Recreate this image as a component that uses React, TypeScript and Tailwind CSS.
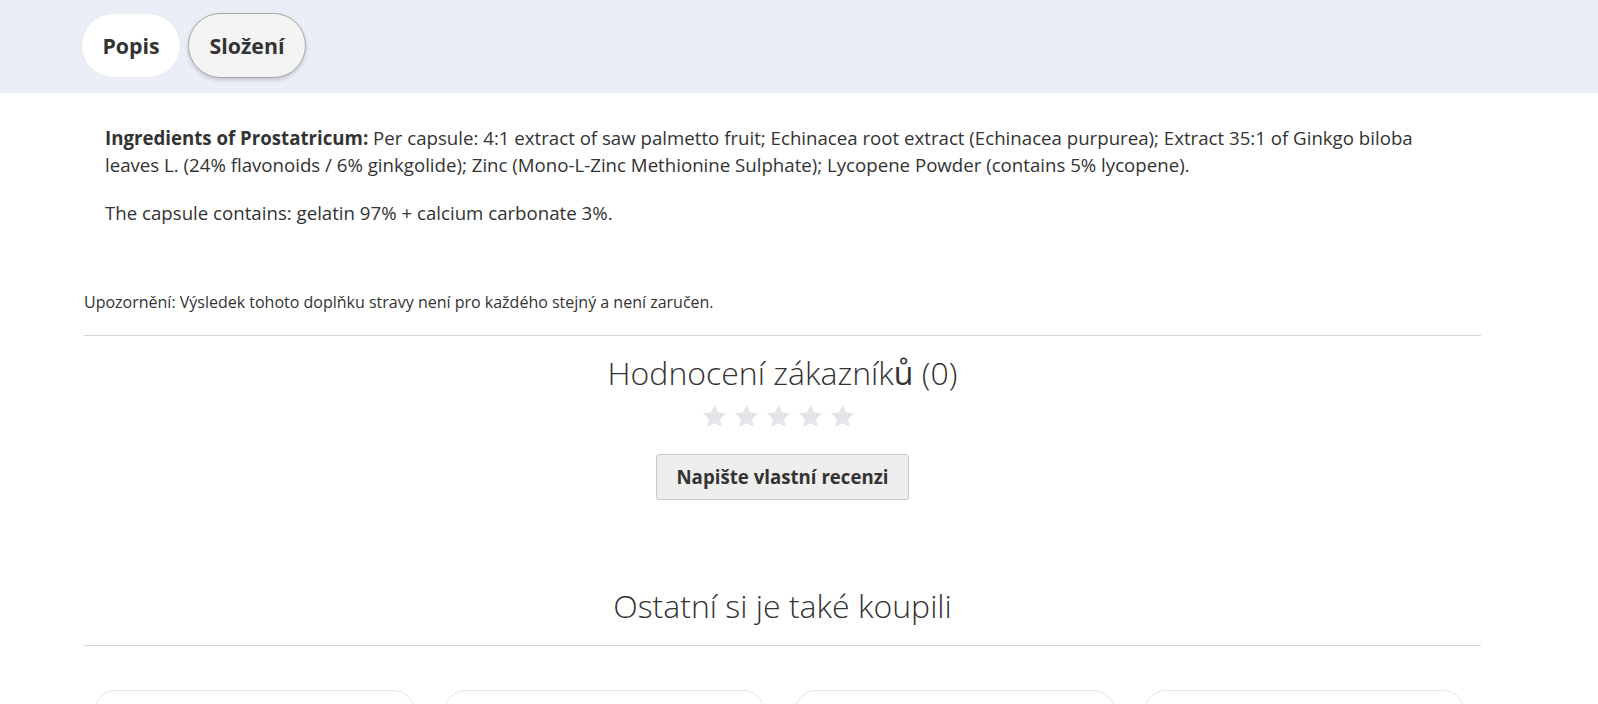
const Star = () => (
  <svg viewBox="0 0 24 24" className="h-[27px] w-[27px]" fill="#e4e5e9">
    <path d="M12 1.6l3.1 6.7 7.3.8-5.4 5 1.5 7.2L12 17.7l-6.5 3.6 1.5-7.2-5.4-5 7.3-.8z" />
  </svg>
);

const App = () => {
  const cards = [0, 1, 2, 3];

  return (
    <div className="min-h-[704px] bg-white text-[#333] overflow-hidden" style={{ fontFamily: '"Open Sans", "Noto Sans", sans-serif' }}>
      {/* Tabs */}
      <div className="h-[93px] bg-[#eaeef7]">
        <div className="ml-[81px] flex gap-[7px] pt-[13px]">
          <button className="h-[65px] w-[100px] rounded-full border border-[#e6e8ee] bg-white text-[21.33px] font-bold text-[#333]">
            Popis
          </button>
          <button className="h-[65px] w-[118px] rounded-full border border-[#a8a8a8] bg-[#f4f4f4] text-[21.33px] font-bold text-[#333] shadow-[0_2px_4px_rgba(0,0,0,0.18)]">
            Složení
          </button>
        </div>
      </div>

      <div className="ml-[84px] w-[1397px]">
        {/* Body */}
        <div className="pl-[21px] pr-[40px] pt-[32px] text-[18.67px] leading-[26.5px]">
          <p>
            <strong className="font-bold">Ingredients of Prostatricum:</strong> Per capsule: 4:1 extract of saw palmetto fruit; Echinacea root extract (Echinacea purpurea); Extract 35:1 of Ginkgo biloba leaves L. (24% flavonoids / 6% ginkgolide); Zinc (Mono-L-Zinc Methionine Sulphate); Lycopene Powder (contains 5% lycopene).
          </p>
          <p className="mt-[22px]">The capsule contains: gelatin 97% + calcium carbonate 3%.</p>
        </div>

        <p className="mt-[64px] text-[16px] leading-[22px]">
          Upozornění: Výsledek tohoto doplňku stravy není pro každého stejný a není zaručen.
        </p>

        <div className="mt-[22px] border-t border-[#d6d6d6]" />

        {/* Reviews */}
        <div className="flex flex-col items-center">
          <h2 className="mt-[17px] text-[32px] font-light leading-[40px]">
            Hodnocení zákazník<span className="font-normal">ů</span> (0)
          </h2>
          <div className="mt-[10px] mr-[8px] flex gap-[5px]">
            <Star />
            <Star />
            <Star />
            <Star />
            <Star />
          </div>
          <button className="mt-[24px] h-[46px] w-[253px] rounded-[3px] border border-[#c9c9c9] bg-[#eeeeee] text-[18.67px] font-bold text-[#333]">
            Napište vlastní recenzi
          </button>
          <h2 className="mt-[86px] text-[32px] font-light leading-[40px]">Ostatní si je také koupili</h2>
        </div>

        <div className="mt-[19px] border-t border-[#d6d6d6]" />

        {/* Product cards */}
        <div className="mt-[44px] ml-[10px] flex gap-[29px]">
          {cards.map((i) => (
            <div key={i} className="h-[200px] w-[321px] rounded-[22px] border border-[#e5e5e5] bg-white" />
          ))}
        </div>
      </div>
    </div>
  );
};

export default App;
